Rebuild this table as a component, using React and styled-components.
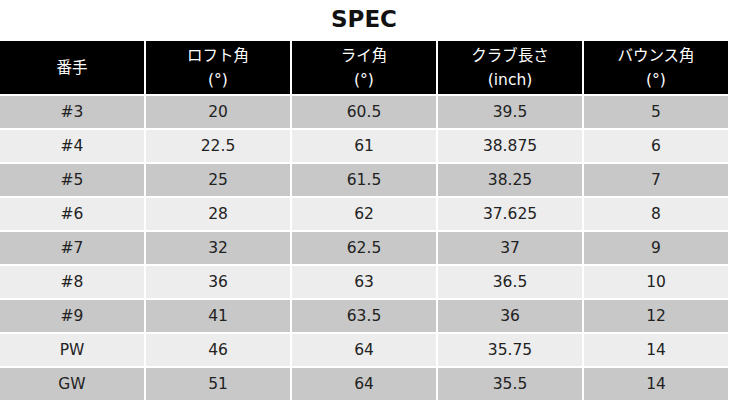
import React from 'react';
import styled, { createGlobalStyle } from 'styled-components';

const Global = createGlobalStyle`
  body {
    margin: 0;
    background: #fff;
    font-family: "DejaVu Sans", "Noto Sans CJK JP", sans-serif;
  }
`;

const Wrap = styled.div`
  width: 728px;
`;

const Title = styled.h2`
  margin: 0;
  height: 41px;
  line-height: 38px;
  text-align: center;
  font-size: 23px;
  font-weight: bold;
  color: #111;
`;

const Grid = styled.div`
  display: grid;
  grid-template-columns: repeat(5, 1fr);
  gap: 2px;
`;

const Head = styled.div`
  height: 53px;
  background: #000;
  color: #fff;
  font-size: 15.5px;
  line-height: 24px;
  display: flex;
  flex-direction: column;
  align-items: center;
  justify-content: center;
`;

const Cell = styled.div`
  height: 32px;
  background: ${(p) => (p.$odd ? '#c8c8c8' : '#ededed')};
  color: #222;
  font-size: 15.5px;
  display: flex;
  align-items: center;
  justify-content: center;
`;

const heads = [
  ['番手'],
  ['ロフト角', '(°)'],
  ['ライ角', '(°)'],
  ['クラブ長さ', '(inch)'],
  ['バウンス角', '(°)'],
];

const rows = [
  ['#3', '20', '60.5', '39.5', '5'],
  ['#4', '22.5', '61', '38.875', '6'],
  ['#5', '25', '61.5', '38.25', '7'],
  ['#6', '28', '62', '37.625', '8'],
  ['#7', '32', '62.5', '37', '9'],
  ['#8', '36', '63', '36.5', '10'],
  ['#9', '41', '63.5', '36', '12'],
  ['PW', '46', '64', '35.75', '14'],
  ['GW', '51', '64', '35.5', '14'],
];

export default function App() {
  return (
    <>
      <Global />
      <Wrap>
        <Title>SPEC</Title>
        <Grid>
          {heads.map((h, i) => (
            <Head key={i}>
              {h.map((t) => (
                <span key={t}>{t}</span>
              ))}
            </Head>
          ))}
          {rows.map((r, ri) =>
            r.map((v, ci) => (
              <Cell key={ri + '-' + ci} $odd={ri % 2 === 0}>
                {v}
              </Cell>
            ))
          )}
        </Grid>
      </Wrap>
    </>
  );
}
